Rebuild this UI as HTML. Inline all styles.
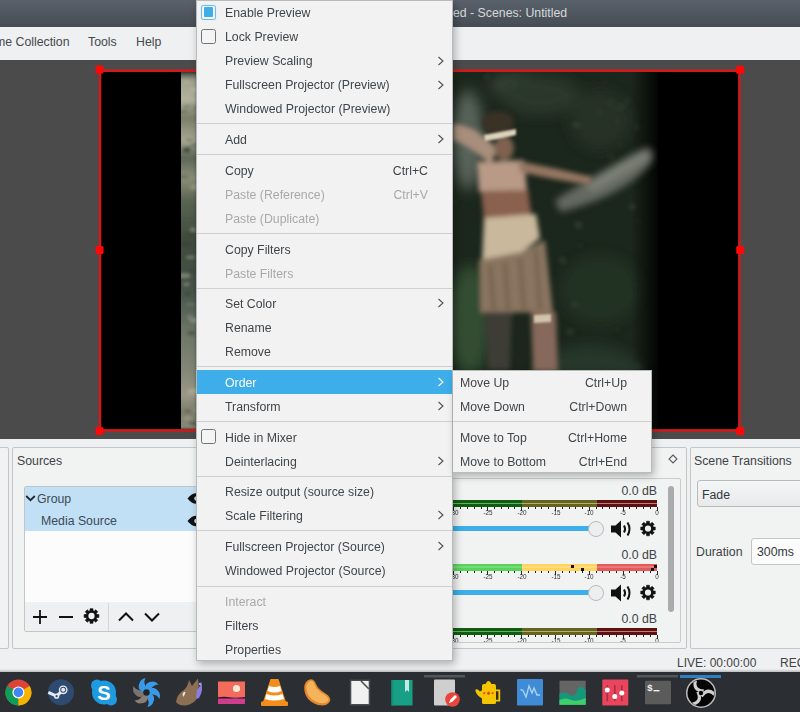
<!DOCTYPE html>
<html><head><meta charset="utf-8">
<style>
*{box-sizing:border-box}
html,body{margin:0;padding:0;width:800px;height:712px;overflow:hidden;background:#eff0f1;font-family:"Liberation Sans",sans-serif;position:relative}
.abs{position:absolute}
#title{position:absolute;left:0;top:0;width:800px;height:27px;background:linear-gradient(#59616a,#454c54)}
#title .t{position:absolute;left:453px;top:6px;font-size:12.3px;color:#d5d9dd;white-space:nowrap}
#menubar{position:absolute;left:0;top:27px;width:800px;height:33px;background:#eff0f1}
#menubar span{position:absolute;top:8px;font-size:12.3px;color:#45494e;white-space:nowrap}
#preview{position:absolute;left:0;top:60px;width:800px;height:379px;background:#4b4b4b;overflow:hidden}
#docks{position:absolute;left:0;top:439px;width:800px;height:233px;background:#eff0f1}
.panel{position:absolute;border:1px solid #c3c6c8;background:#f1f2f2;border-radius:2px}
.ptitle{position:absolute;font-size:12.3px;color:#3e4347;white-space:nowrap}
#menu{position:absolute;left:196px;top:0px;width:257px;height:661px;background:#f2f2f2;border:1px solid #b8babc;box-shadow:2px 3px 8px rgba(0,0,0,0.28)}
.mi{position:absolute;left:0;width:255px;height:24px;font-size:12.3px;color:#41464b}
.mi .lbl{position:absolute;left:28px;top:5.5px;white-space:nowrap}
.mi .sc{position:absolute;right:24px;top:5.5px;white-space:nowrap}
.mi.dis{color:#a7a9ab}
.mi.hl{background:#3daee9;color:#fcfcfc}
.mi .arr{position:absolute;left:240px;top:7px;color:#4d5257}
.mi.hl .arr{color:#fcfcfc}
.sep{position:absolute;left:0;width:255px;height:1px;background:#cfd0d1}
.cb{position:absolute;left:4.3px;top:4.3px;width:14.5px;height:14.8px;border:1px solid #707478;border-radius:2.5px;background:#f4f4f4}
.cb.on{border-color:#6cbbe9;box-shadow:0 0 1px #a8d8f5}
.cbin{position:absolute;left:1.6px;top:1.6px;width:9.3px;height:9.3px;background:#3daee9;border-radius:1px}
#sub{position:absolute;left:453px;top:370px;width:199px;height:103px;background:#f2f2f2;border:1px solid #b8babc;border-left:none;box-shadow:2px 3px 8px rgba(0,0,0,0.28)}
.smi{position:absolute;left:0;width:198px;height:24px;font-size:12.3px;color:#41464b}
.smi .lbl{position:absolute;left:7px;top:5px;white-space:nowrap}
.smi .sc{position:absolute;right:24px;top:5px;white-space:nowrap}
.db{position:absolute;right:24px;font-size:12.3px;color:#3e4347;white-space:nowrap}
.tnum{position:absolute;width:20px;text-align:center;font-size:7px;color:#333;transform:scaleX(0.9)}
.knob{position:absolute;width:16px;height:16px;border-radius:50%;background:#eceeef;border:1px solid #b7babc}
#status{position:absolute;left:0;top:655px;width:800px;height:17px;background:#eff0f1}
#status span{position:absolute;top:1px;font-size:12px;color:#3e4347;white-space:nowrap}
#taskbar{position:absolute;left:0;top:672px;width:800px;height:40px;background:#2b2f33}
</style></head><body>
<div id="title"><span class="t">ed - Scenes: Untitled</span></div>
<div id="menubar">
 <span style="left:-5px">me Collection</span>
 <span style="left:88px">Tools</span>
 <span style="left:136px">Help</span>
</div>
<div id="preview">
 <div class="abs" style="left:100px;top:11px;width:639px;height:360px;background:#000"></div>
 <svg class="abs" style="left:181px;top:12px" width="477" height="357" viewBox="181 72 477 357">
  <defs>
   <filter id="b6" x="-50%" y="-50%" width="200%" height="200%"><feGaussianBlur stdDeviation="7"/></filter>
   <filter id="b3" x="-50%" y="-50%" width="200%" height="200%"><feGaussianBlur stdDeviation="2.6"/></filter>
   <filter id="b1" x="-50%" y="-50%" width="200%" height="200%"><feGaussianBlur stdDeviation="1"/></filter>
   <linearGradient id="strip" x1="0" y1="72" x2="0" y2="429" gradientUnits="userSpaceOnUse"><stop offset="0.000" stop-color="#3a4038"/><stop offset="0.022" stop-color="#a0a28e"/><stop offset="0.078" stop-color="#b2b29c"/><stop offset="0.129" stop-color="#7a7e68"/><stop offset="0.185" stop-color="#a3a48c"/><stop offset="0.241" stop-color="#5e6658"/><stop offset="0.297" stop-color="#8c9079"/><stop offset="0.359" stop-color="#5a6452"/><stop offset="0.471" stop-color="#3f4b3d"/><stop offset="0.611" stop-color="#46534a"/><stop offset="0.723" stop-color="#6a7466"/><stop offset="0.835" stop-color="#838676"/><stop offset="0.905" stop-color="#9a9886"/><stop offset="0.952" stop-color="#7c7c6a"/><stop offset="1.000" stop-color="#8a8a78"/></linearGradient>
  </defs>
  <rect x="181" y="72" width="477" height="357" fill="#1b261c"/>
  <g filter="url(#b6)">
   <ellipse cx="468" cy="140" rx="16" ry="50" fill="#58645a"/>
   <ellipse cx="520" cy="85" rx="30" ry="12" fill="#3a463a"/>
   <ellipse cx="540" cy="95" rx="40" ry="20" fill="#2b382c"/>
   <ellipse cx="600" cy="120" rx="30" ry="30" fill="#253126"/>
   <ellipse cx="470" cy="320" rx="22" ry="55" fill="#334d33"/>
   <ellipse cx="600" cy="290" rx="40" ry="35" fill="#223024"/>
   <ellipse cx="590" cy="380" rx="55" ry="35" fill="#25382a"/>
   <ellipse cx="500" cy="410" rx="60" ry="25" fill="#2c3f2c"/>
   
  </g>
  <filter id="b15" x="-50%" y="-50%" width="200%" height="200%"><feGaussianBlur stdDeviation="1.6"/></filter>
  <g filter="url(#b15)">
   <rect x="176" y="72" width="21" height="357" fill="url(#strip)"/>
   <ellipse cx="189.7" cy="233.9" rx="4.5" ry="2.3" fill="#303a2e" opacity="0.32"/>
   <ellipse cx="189.1" cy="140.4" rx="3.3" ry="1.7" fill="#303a2e" opacity="0.40"/>
   <ellipse cx="192.7" cy="107.6" rx="5.9" ry="2.9" fill="#303a2e" opacity="0.21"/>
   <ellipse cx="190.4" cy="304.2" rx="4.6" ry="1.3" fill="#c4c4ac" opacity="0.20"/>
   <ellipse cx="185.9" cy="142.4" rx="4.3" ry="2.7" fill="#c4c4ac" opacity="0.32"/>
   <ellipse cx="190.7" cy="257.2" rx="4.4" ry="1.7" fill="#c4c4ac" opacity="0.37"/>
   <ellipse cx="194.9" cy="424.2" rx="3.9" ry="1.6" fill="#303a2e" opacity="0.38"/>
   <ellipse cx="183.8" cy="176.9" rx="5.5" ry="1.9" fill="#303a2e" opacity="0.30"/>
   <ellipse cx="193.2" cy="410.4" rx="5.7" ry="2.0" fill="#c4c4ac" opacity="0.25"/>
   <ellipse cx="187.8" cy="418.1" rx="5.3" ry="1.7" fill="#c4c4ac" opacity="0.36"/>
   <ellipse cx="187.0" cy="106.4" rx="3.4" ry="1.6" fill="#303a2e" opacity="0.39"/>
   <ellipse cx="183.7" cy="111.3" rx="4.7" ry="2.0" fill="#303a2e" opacity="0.24"/>
   <ellipse cx="191.8" cy="142.5" rx="3.3" ry="2.0" fill="#c4c4ac" opacity="0.36"/>
   <ellipse cx="186.2" cy="150.3" rx="3.9" ry="2.8" fill="#303a2e" opacity="0.40"/>
   <ellipse cx="187.7" cy="149.5" rx="3.3" ry="3.0" fill="#303a2e" opacity="0.36"/>
   <ellipse cx="186.1" cy="150.4" rx="3.9" ry="1.3" fill="#303a2e" opacity="0.28"/>
   <ellipse cx="190.0" cy="107.5" rx="4.1" ry="2.0" fill="#c4c4ac" opacity="0.35"/>
   <ellipse cx="188.8" cy="410.7" rx="3.5" ry="1.5" fill="#303a2e" opacity="0.42"/>
   <ellipse cx="192.8" cy="393.0" rx="5.2" ry="2.9" fill="#c4c4ac" opacity="0.25"/>
   <ellipse cx="194.4" cy="144.6" rx="4.3" ry="1.4" fill="#303a2e" opacity="0.35"/>
   <ellipse cx="194.6" cy="89.5" rx="3.8" ry="2.7" fill="#c4c4ac" opacity="0.38"/>
   <ellipse cx="186.5" cy="284.2" rx="3.2" ry="1.6" fill="#c4c4ac" opacity="0.38"/>
   <ellipse cx="193.2" cy="271.2" rx="5.8" ry="1.6" fill="#303a2e" opacity="0.27"/>
   <ellipse cx="186.2" cy="81.8" rx="3.5" ry="1.9" fill="#c4c4ac" opacity="0.22"/>
   <ellipse cx="184.6" cy="275.7" rx="5.9" ry="2.4" fill="#c4c4ac" opacity="0.42"/>
   <ellipse cx="190.0" cy="317.2" rx="3.1" ry="2.8" fill="#c4c4ac" opacity="0.21"/>
   <ellipse cx="194.6" cy="320.6" rx="4.4" ry="2.5" fill="#c4c4ac" opacity="0.36"/>
   <ellipse cx="195.0" cy="187.3" rx="5.2" ry="2.8" fill="#c4c4ac" opacity="0.34"/>
   <ellipse cx="191.4" cy="333.2" rx="4.1" ry="2.4" fill="#303a2e" opacity="0.43"/>
   <ellipse cx="193.5" cy="390.4" rx="5.6" ry="2.2" fill="#c4c4ac" opacity="0.40"/>
   <ellipse cx="187.6" cy="294.1" rx="3.2" ry="2.4" fill="#303a2e" opacity="0.35"/>
   <ellipse cx="193.6" cy="422.7" rx="5.2" ry="2.2" fill="#303a2e" opacity="0.30"/>
   <ellipse cx="193.1" cy="229.7" rx="3.1" ry="2.3" fill="#c4c4ac" opacity="0.39"/>
   <ellipse cx="185.8" cy="243.9" rx="4.8" ry="2.9" fill="#303a2e" opacity="0.32"/>
  </g>
  <rect x="171" y="72" width="10" height="357" fill="#000"/>
  <g filter="url(#b3)" opacity="0.8">
   <ellipse cx="477.5" cy="393.5" rx="3.7" ry="2.3" fill="#3a4a3a" opacity="0.63"/>
   <ellipse cx="617.2" cy="120.8" rx="2.8" ry="1.0" fill="#5a6a56" opacity="0.48"/>
   <ellipse cx="487.2" cy="76.4" rx="1.9" ry="1.9" fill="#5a6a56" opacity="0.59"/>
   <ellipse cx="599.7" cy="112.1" rx="2.1" ry="1.6" fill="#4a5a48" opacity="0.61"/>
   <ellipse cx="595.1" cy="394.4" rx="2.3" ry="2.9" fill="#6a7566" opacity="0.54"/>
   <ellipse cx="550.8" cy="381.6" rx="3.8" ry="2.8" fill="#3a4a3a" opacity="0.38"/>
   <ellipse cx="578.5" cy="224.9" rx="3.2" ry="2.6" fill="#5a6a56" opacity="0.66"/>
   <ellipse cx="576.5" cy="125.0" rx="3.9" ry="1.4" fill="#5a6a56" opacity="0.68"/>
   <ellipse cx="638.1" cy="366.4" rx="3.3" ry="3.0" fill="#5a6a56" opacity="0.46"/>
   <ellipse cx="584.5" cy="209.5" rx="2.8" ry="1.1" fill="#3a4a3a" opacity="0.69"/>
   <ellipse cx="600.4" cy="415.1" rx="1.7" ry="1.5" fill="#4a5a48" opacity="0.66"/>
   <ellipse cx="606.3" cy="372.4" rx="2.5" ry="2.1" fill="#3a4a3a" opacity="0.51"/>
   <ellipse cx="487.3" cy="388.3" rx="3.8" ry="2.3" fill="#3a4a3a" opacity="0.62"/>
   <ellipse cx="468.7" cy="374.7" rx="2.2" ry="1.2" fill="#4a5a48" opacity="0.30"/>
   <ellipse cx="638.9" cy="221.2" rx="3.1" ry="1.1" fill="#3a4a3a" opacity="0.58"/>
   <ellipse cx="628.4" cy="414.2" rx="1.6" ry="1.4" fill="#3a4a3a" opacity="0.42"/>
   <ellipse cx="456.4" cy="162.7" rx="1.5" ry="2.0" fill="#4a5a48" opacity="0.69"/>
   <ellipse cx="574.6" cy="304.8" rx="3.9" ry="1.6" fill="#6a7566" opacity="0.39"/>
   <ellipse cx="617.9" cy="330.1" rx="2.5" ry="1.7" fill="#5a6a56" opacity="0.32"/>
   <ellipse cx="477.3" cy="99.8" rx="2.6" ry="1.1" fill="#3a4a3a" opacity="0.57"/>
   <ellipse cx="634.6" cy="284.6" rx="1.6" ry="1.4" fill="#3a4a3a" opacity="0.41"/>
   <ellipse cx="453.7" cy="202.4" rx="3.9" ry="2.1" fill="#3a4a3a" opacity="0.40"/>
   <ellipse cx="633.6" cy="183.3" rx="2.0" ry="1.7" fill="#3a4a3a" opacity="0.33"/>
   <ellipse cx="470.0" cy="361.0" rx="2.5" ry="1.1" fill="#5a6a56" opacity="0.31"/>
   <ellipse cx="562.5" cy="260.2" rx="3.1" ry="2.4" fill="#5a6a56" opacity="0.65"/>
   <ellipse cx="637.1" cy="127.3" rx="1.6" ry="2.7" fill="#5a6a56" opacity="0.66"/>
   <ellipse cx="570.3" cy="331.8" rx="3.8" ry="2.5" fill="#5a6a56" opacity="0.53"/>
   <ellipse cx="605.0" cy="80.6" rx="1.7" ry="1.1" fill="#5a6a56" opacity="0.55"/>
   <ellipse cx="632.4" cy="206.8" rx="2.9" ry="2.3" fill="#6a7566" opacity="0.55"/>
   <ellipse cx="580.3" cy="246.3" rx="2.6" ry="1.1" fill="#4a5a48" opacity="0.67"/>
   <ellipse cx="620.9" cy="107.2" rx="3.4" ry="1.9" fill="#4a5a48" opacity="0.62"/>
   <ellipse cx="611.2" cy="157.2" rx="2.1" ry="2.3" fill="#5a6a56" opacity="0.48"/>
   <ellipse cx="611.1" cy="101.9" rx="3.4" ry="2.2" fill="#3a4a3a" opacity="0.56"/>
   <ellipse cx="467.5" cy="126.6" rx="3.1" ry="2.4" fill="#3a4a3a" opacity="0.55"/>
   <ellipse cx="543.8" cy="415.4" rx="3.2" ry="2.4" fill="#4a5a48" opacity="0.42"/>
   <ellipse cx="620.1" cy="144.7" rx="3.8" ry="1.0" fill="#4a5a48" opacity="0.48"/>
   <ellipse cx="606.3" cy="413.8" rx="4.0" ry="1.8" fill="#6a7566" opacity="0.67"/>
   <ellipse cx="627.0" cy="101.1" rx="1.9" ry="2.0" fill="#4a5a48" opacity="0.68"/>
  </g>
  <linearGradient id="edge" x1="0" x2="1"><stop offset="0" stop-color="#000" stop-opacity="0"/><stop offset="1" stop-color="#000" stop-opacity="0.85"/></linearGradient>
  <rect x="632" y="72" width="26" height="357" fill="url(#edge)"/>
  <filter id="b4" x="-50%" y="-50%" width="200%" height="200%"><feGaussianBlur stdDeviation="3.5"/></filter>
  <g filter="url(#b4)">
   <path d="M555 200 Q600 172 640 150 Q656 142 652 162 Q625 196 560 212Z" fill="#6c7068" opacity="0.9"/>
   <path d="M585 185 Q615 165 643 152 Q650 152 648 160 Q625 175 592 192Z" fill="#8a8d84" opacity="0.6"/>
  </g>
  <g filter="url(#b3)">
   <!-- fan -->

   <!-- left raised arm -->
   <path d="M453 124 Q475 124 498 150 L490 164 Q470 146 453 140Z" fill="#a88e7c"/>
   <!-- hair -->
   <ellipse cx="498" cy="123" rx="16" ry="12" fill="#3b3026"/>
   <!-- face -->
   <ellipse cx="504" cy="148" rx="10" ry="12" fill="#7e6250"/>
   <!-- torso / bikini top -->
   <path d="M477 162 L524 160 L527 191 L479 192Z" fill="#b89a86"/>
   <!-- right arm -->
   <path d="M518 161 Q555 168 592 177 L590 185 Q555 180 520 172Z" fill="#957762"/>
   <!-- belly -->
   <path d="M481 191 L528 190 L532 220 L484 220Z" fill="#8a6050"/>
   <!-- skirt top -->
   <path d="M484 218 L536 214 L540 238 L520 254 L482 262Z" fill="#c9b89c"/>
   <!-- skirt -->
   <path d="M479 260 L522 252 L545 240 L553 312 L480 313Z" fill="#8a7560"/>
   <path d="M490 265 L494 310 M505 262 L508 310 M520 258 L524 310 M536 250 L540 310" stroke="#6e5a48" stroke-width="3"/>
   <!-- left leg -->
   <path d="M484 312 L512 312 L510 370 L488 370Z" fill="#3d3e34"/>
   <!-- right leg -->
   <path d="M531 312 L556 312 L558 372 L533 372Z" fill="#86695a"/>
  </g>
  <g filter="url(#b1)">
   <path d="M484 135 Q500 132 516 129 L516 135 Q500 139 485 141Z" fill="#ddd2bc"/>
   <path d="M534 315 L551 314 L551 322 L534 323Z" fill="#d0c4aa"/>
  </g>
 </svg>
 <svg class="abs" style="left:0;top:0" width="800" height="379" viewBox="0 60 800 379">
  <rect x="100" y="70.7" width="639.4" height="359.7" fill="none" stroke="#cf1b1b" stroke-width="2.6"/>
  <g fill="#ff0707">
   <rect x="95.5" y="65.5" width="8" height="8" rx="1.5"/>
   <rect x="95.5" y="246" width="8" height="8" rx="1.5"/>
   <rect x="95.5" y="427" width="8" height="8" rx="1.5"/>
   <rect x="736.2" y="65.7" width="8" height="8" rx="1.5"/>
   <rect x="736.2" y="246" width="8" height="8" rx="1.5"/>
   <rect x="736.2" y="427" width="8" height="8" rx="1.5"/>
  </g>
 </svg>
</div>
<div id="docks">
 <div class="panel" style="left:-10px;top:8px;width:19px;height:202px"></div>
 <div class="panel" style="left:12px;top:8px;width:340px;height:202px">
  <span class="ptitle" style="left:4px;top:6px">Sources</span>
  <div class="abs" style="left:11px;top:38px;width:330px;height:146px;border:1px solid #c3c6c8;background:#fcfcfc;border-radius:2px;overflow:hidden">
   <div class="abs" style="left:0;top:0;width:330px;height:44px;background:#c2e0f5"></div>
   <svg class="abs" style="left:0px;top:6px" width="12" height="10" viewBox="0 0 12 10"><path d="M1.2 3 L5.5 7.2 L9.8 3" fill="none" stroke="#1d2a33" stroke-width="1.8"/></svg>
   <span class="abs" style="left:12px;top:5px;font-size:12.3px;color:#3b4a55">Group</span>
   <span class="abs" style="left:16px;top:27px;font-size:12.3px;color:#3b4a55">Media Source</span>
   <svg class="abs" style="left:162px;top:6px" width="18" height="36" viewBox="0 0 18 36"><path d="M0.5 5.5 Q9 -5 17.5 5.5 Q9 16 0.5 5.5Z" fill="#111"/><circle cx="9.5" cy="5.5" r="2.3" fill="#c2e0f5"/><path d="M0.5 28 Q9 17.5 17.5 28 Q9 38.5 0.5 28Z" fill="#111"/><circle cx="9.5" cy="28" r="2.3" fill="#c2e0f5"/></svg>
   <div class="abs" style="left:0;top:115px;width:330px;height:31px;background:#eff0f1"></div>
   <div class="abs" style="left:83px;top:116px;width:1px;height:28px;background:#d5d6d7"></div>
   <svg class="abs" style="left:6.5px;top:122px" width="16" height="16" viewBox="0 0 16 16"><path d="M8 1v14M1 8h14" stroke="#111" stroke-width="1.8"/></svg>
   <svg class="abs" style="left:32.8px;top:122px" width="16" height="16" viewBox="0 0 16 16"><path d="M1 8h14" stroke="#111" stroke-width="1.8"/></svg>
   <svg class="abs" style="left:93px;top:125px" width="16" height="10" viewBox="0 0 16 10"><path d="M1 8.5 L8 1.5 L15 8.5" fill="none" stroke="#111" stroke-width="2"/></svg>
   <svg class="abs" style="left:118.5px;top:124.5px" width="16" height="10" viewBox="0 0 16 10"><path d="M1 1.5 L8 8.5 L15 1.5" fill="none" stroke="#111" stroke-width="2"/></svg>
  </div>
 </div>
 <div class="panel" style="left:352px;top:8px;width:335px;height:202px">
  <div class="abs" style="left:300px;top:-2px"></div>
 </div>
 <svg class="abs" style="left:668px;top:15px" width="10" height="10" viewBox="0 0 10 10"><path d="M5 1 L9 5 L5 9 L1 5Z" fill="none" stroke="#5a5e62" stroke-width="1.1"/></svg>
 <div class="abs" style="left:360px;top:39px;width:321px;height:165px;border:1px solid #c9cbcd;border-radius:2px"></div>
 <div class="abs" style="left:668px;top:47px;width:6px;height:126px;background:#a9abad;border-radius:3px"></div>
 <div class="panel" style="left:690px;top:8px;width:120px;height:202px">
  <span class="ptitle" style="left:3px;top:6px">Scene Transitions</span>
  <div class="abs" style="left:6px;top:32px;width:120px;height:27px;border:1px solid #b9bcbe;border-radius:3px;background:linear-gradient(#f4f5f5,#e9eaeb)"></div>
  <span class="abs" style="left:11px;top:39.5px;font-size:12.3px;color:#33383d">Fade</span>
  <span class="abs" style="left:5px;top:97px;font-size:12.3px;color:#3e4347">Duration</span>
  <div class="abs" style="left:60px;top:90px;width:80px;height:27px;border:1px solid #c3c6c8;border-radius:3px;background:#fcfcfc"></div>
  <span class="abs" style="left:66px;top:97px;font-size:12.3px;color:#33383d">300ms</span>
 </div>
</div>
<div style="position:absolute;left:0;top:0;width:681px;height:642px;overflow:hidden"><div class="db" style="top:484px">0.0 dB</div><div style="position:absolute;left:250.8px;top:500px;width:270.8px;height:6.6px;background:linear-gradient(#135a13 0 2.5px,#5cb55c 2.5px 4.4px,#135a13 4.4px 6.6px)"></div><div style="position:absolute;left:521.6px;top:500px;width:75.0px;height:6.6px;background:linear-gradient(#646420 0 2.5px,#b0b068 2.5px 4.4px,#646420 4.4px 6.6px)"></div><div style="position:absolute;left:596.6px;top:500px;width:60.4px;height:6.6px;background:linear-gradient(#5c1010 0 2.5px,#c07a7a 2.5px 4.4px,#5c1010 4.4px 6.6px)"></div><div style="position:absolute;left:656.5px;top:506.6px;width:1px;height:4px;background:#222"></div><div class="tnum" style="left:647.0px;top:509px">0</div><div style="position:absolute;left:649.7px;top:506.6px;width:1px;height:2px;background:#222"></div><div style="position:absolute;left:643.0px;top:506.6px;width:1px;height:2px;background:#222"></div><div style="position:absolute;left:636.2px;top:506.6px;width:1px;height:2px;background:#222"></div><div style="position:absolute;left:629.4px;top:506.6px;width:1px;height:2px;background:#222"></div><div style="position:absolute;left:622.6px;top:506.6px;width:1px;height:4px;background:#222"></div><div class="tnum" style="left:613.1px;top:509px">-5</div><div style="position:absolute;left:615.9px;top:506.6px;width:1px;height:2px;background:#222"></div><div style="position:absolute;left:609.1px;top:506.6px;width:1px;height:2px;background:#222"></div><div style="position:absolute;left:602.3px;top:506.6px;width:1px;height:2px;background:#222"></div><div style="position:absolute;left:595.6px;top:506.6px;width:1px;height:2px;background:#222"></div><div style="position:absolute;left:588.8px;top:506.6px;width:1px;height:4px;background:#222"></div><div class="tnum" style="left:579.3px;top:509px">-10</div><div style="position:absolute;left:582.0px;top:506.6px;width:1px;height:2px;background:#222"></div><div style="position:absolute;left:575.3px;top:506.6px;width:1px;height:2px;background:#222"></div><div style="position:absolute;left:568.5px;top:506.6px;width:1px;height:2px;background:#222"></div><div style="position:absolute;left:561.7px;top:506.6px;width:1px;height:2px;background:#222"></div><div style="position:absolute;left:555.0px;top:506.6px;width:1px;height:4px;background:#222"></div><div class="tnum" style="left:545.5px;top:509px">-15</div><div style="position:absolute;left:548.2px;top:506.6px;width:1px;height:2px;background:#222"></div><div style="position:absolute;left:541.4px;top:506.6px;width:1px;height:2px;background:#222"></div><div style="position:absolute;left:534.6px;top:506.6px;width:1px;height:2px;background:#222"></div><div style="position:absolute;left:527.9px;top:506.6px;width:1px;height:2px;background:#222"></div><div style="position:absolute;left:521.1px;top:506.6px;width:1px;height:4px;background:#222"></div><div class="tnum" style="left:511.6px;top:509px">-20</div><div style="position:absolute;left:514.3px;top:506.6px;width:1px;height:2px;background:#222"></div><div style="position:absolute;left:507.6px;top:506.6px;width:1px;height:2px;background:#222"></div><div style="position:absolute;left:500.8px;top:506.6px;width:1px;height:2px;background:#222"></div><div style="position:absolute;left:494.0px;top:506.6px;width:1px;height:2px;background:#222"></div><div style="position:absolute;left:487.2px;top:506.6px;width:1px;height:4px;background:#222"></div><div class="tnum" style="left:477.8px;top:509px">-25</div><div style="position:absolute;left:480.5px;top:506.6px;width:1px;height:2px;background:#222"></div><div style="position:absolute;left:473.7px;top:506.6px;width:1px;height:2px;background:#222"></div><div style="position:absolute;left:466.9px;top:506.6px;width:1px;height:2px;background:#222"></div><div style="position:absolute;left:460.2px;top:506.6px;width:1px;height:2px;background:#222"></div><div style="position:absolute;left:453.4px;top:506.6px;width:1px;height:4px;background:#222"></div><div class="tnum" style="left:443.9px;top:509px">-30</div><div style="position:absolute;left:446.6px;top:506.6px;width:1px;height:2px;background:#222"></div><div style="position:absolute;left:439.9px;top:506.6px;width:1px;height:2px;background:#222"></div><div style="position:absolute;left:440px;top:526.0px;width:156px;height:5px;background:#3daee9;border-radius:2px"></div><div class="knob" style="left:588px;top:520.5px"></div><svg style="position:absolute;left:610px;top:518.5px" width="24" height="20" viewBox="0 0 24 20"><path d="M1 6.5h4.5L11 1.5v17L5.5 13.5H1z" fill="#111"/><path d="M14 6.5q2.2 3.5 0 7" fill="none" stroke="#111" stroke-width="2"/><path d="M17.5 3.5q4 6.5 0 13" fill="none" stroke="#111" stroke-width="2"/></svg><svg style="position:absolute;left:0;top:0;overflow:visible" width="1" height="1"><path d="M653.26 526.99 L655.26 527.09 L655.26 529.91 L653.26 530.01 L652.79 531.15 L654.13 532.64 L652.14 534.63 L650.65 533.29 L649.51 533.76 L649.41 535.76 L646.59 535.76 L646.49 533.76 L645.35 533.29 L643.86 534.63 L641.87 532.64 L643.21 531.15 L642.74 530.01 L640.74 529.91 L640.74 527.09 L642.74 526.99 L643.21 525.85 L641.87 524.36 L643.86 522.37 L645.35 523.71 L646.49 523.24 L646.59 521.24 L649.41 521.24 L649.51 523.24 L650.65 523.71 L652.14 522.37 L654.13 524.36 L652.79 525.85Z" fill="#111" stroke="#111" stroke-width="0.6" stroke-linejoin="round"/><circle cx="648" cy="528.5" r="3.11" fill="#eff0f1"/></svg><div class="db" style="top:548px">0.0 dB</div><div style="position:absolute;left:250.8px;top:564px;width:270.8px;height:6.6px;background:linear-gradient(#5bd35b 0 2.5px,#74dc74 2.5px 4.4px,#5bd35b 4.4px 6.6px)"></div><div style="position:absolute;left:521.6px;top:564px;width:75.0px;height:6.6px;background:linear-gradient(#ffd35c 0 2.5px,#ffdc7a 2.5px 4.4px,#ffd35c 4.4px 6.6px)"></div><div style="position:absolute;left:596.6px;top:564px;width:60.4px;height:6.6px;background:linear-gradient(#e35a5a 0 2.5px,#ea7878 2.5px 4.4px,#e35a5a 4.4px 6.6px)"></div><div style="position:absolute;left:656.5px;top:570.6px;width:1px;height:4px;background:#222"></div><div class="tnum" style="left:647.0px;top:573px">0</div><div style="position:absolute;left:649.7px;top:570.6px;width:1px;height:2px;background:#222"></div><div style="position:absolute;left:643.0px;top:570.6px;width:1px;height:2px;background:#222"></div><div style="position:absolute;left:636.2px;top:570.6px;width:1px;height:2px;background:#222"></div><div style="position:absolute;left:629.4px;top:570.6px;width:1px;height:2px;background:#222"></div><div style="position:absolute;left:622.6px;top:570.6px;width:1px;height:4px;background:#222"></div><div class="tnum" style="left:613.1px;top:573px">-5</div><div style="position:absolute;left:615.9px;top:570.6px;width:1px;height:2px;background:#222"></div><div style="position:absolute;left:609.1px;top:570.6px;width:1px;height:2px;background:#222"></div><div style="position:absolute;left:602.3px;top:570.6px;width:1px;height:2px;background:#222"></div><div style="position:absolute;left:595.6px;top:570.6px;width:1px;height:2px;background:#222"></div><div style="position:absolute;left:588.8px;top:570.6px;width:1px;height:4px;background:#222"></div><div class="tnum" style="left:579.3px;top:573px">-10</div><div style="position:absolute;left:582.0px;top:570.6px;width:1px;height:2px;background:#222"></div><div style="position:absolute;left:575.3px;top:570.6px;width:1px;height:2px;background:#222"></div><div style="position:absolute;left:568.5px;top:570.6px;width:1px;height:2px;background:#222"></div><div style="position:absolute;left:561.7px;top:570.6px;width:1px;height:2px;background:#222"></div><div style="position:absolute;left:555.0px;top:570.6px;width:1px;height:4px;background:#222"></div><div class="tnum" style="left:545.5px;top:573px">-15</div><div style="position:absolute;left:548.2px;top:570.6px;width:1px;height:2px;background:#222"></div><div style="position:absolute;left:541.4px;top:570.6px;width:1px;height:2px;background:#222"></div><div style="position:absolute;left:534.6px;top:570.6px;width:1px;height:2px;background:#222"></div><div style="position:absolute;left:527.9px;top:570.6px;width:1px;height:2px;background:#222"></div><div style="position:absolute;left:521.1px;top:570.6px;width:1px;height:4px;background:#222"></div><div class="tnum" style="left:511.6px;top:573px">-20</div><div style="position:absolute;left:514.3px;top:570.6px;width:1px;height:2px;background:#222"></div><div style="position:absolute;left:507.6px;top:570.6px;width:1px;height:2px;background:#222"></div><div style="position:absolute;left:500.8px;top:570.6px;width:1px;height:2px;background:#222"></div><div style="position:absolute;left:494.0px;top:570.6px;width:1px;height:2px;background:#222"></div><div style="position:absolute;left:487.2px;top:570.6px;width:1px;height:4px;background:#222"></div><div class="tnum" style="left:477.8px;top:573px">-25</div><div style="position:absolute;left:480.5px;top:570.6px;width:1px;height:2px;background:#222"></div><div style="position:absolute;left:473.7px;top:570.6px;width:1px;height:2px;background:#222"></div><div style="position:absolute;left:466.9px;top:570.6px;width:1px;height:2px;background:#222"></div><div style="position:absolute;left:460.2px;top:570.6px;width:1px;height:2px;background:#222"></div><div style="position:absolute;left:453.4px;top:570.6px;width:1px;height:4px;background:#222"></div><div class="tnum" style="left:443.9px;top:573px">-30</div><div style="position:absolute;left:446.6px;top:570.6px;width:1px;height:2px;background:#222"></div><div style="position:absolute;left:439.9px;top:570.6px;width:1px;height:2px;background:#222"></div><div style="position:absolute;left:571px;top:565px;width:2.5px;height:2.5px;background:#111"></div><div style="position:absolute;left:581px;top:568px;width:2.5px;height:2.5px;background:#111"></div><div style="position:absolute;left:654px;top:565px;width:2.5px;height:2.5px;background:#111"></div><div style="position:absolute;left:651px;top:568px;width:2.5px;height:2.5px;background:#111"></div><div style="position:absolute;left:440px;top:590.0px;width:156px;height:5px;background:#3daee9;border-radius:2px"></div><div class="knob" style="left:588px;top:584.5px"></div><svg style="position:absolute;left:610px;top:582.5px" width="24" height="20" viewBox="0 0 24 20"><path d="M1 6.5h4.5L11 1.5v17L5.5 13.5H1z" fill="#111"/><path d="M14 6.5q2.2 3.5 0 7" fill="none" stroke="#111" stroke-width="2"/><path d="M17.5 3.5q4 6.5 0 13" fill="none" stroke="#111" stroke-width="2"/></svg><svg style="position:absolute;left:0;top:0;overflow:visible" width="1" height="1"><path d="M653.26 590.99 L655.26 591.09 L655.26 593.91 L653.26 594.01 L652.79 595.15 L654.13 596.64 L652.14 598.63 L650.65 597.29 L649.51 597.76 L649.41 599.76 L646.59 599.76 L646.49 597.76 L645.35 597.29 L643.86 598.63 L641.87 596.64 L643.21 595.15 L642.74 594.01 L640.74 593.91 L640.74 591.09 L642.74 590.99 L643.21 589.85 L641.87 588.36 L643.86 586.37 L645.35 587.71 L646.49 587.24 L646.59 585.24 L649.41 585.24 L649.51 587.24 L650.65 587.71 L652.14 586.37 L654.13 588.36 L652.79 589.85Z" fill="#111" stroke="#111" stroke-width="0.6" stroke-linejoin="round"/><circle cx="648" cy="592.5" r="3.11" fill="#eff0f1"/></svg><div class="db" style="top:612px">0.0 dB</div><div style="position:absolute;left:250.8px;top:628px;width:270.8px;height:6.6px;background:linear-gradient(#135a13 0 2.5px,#5cb55c 2.5px 4.4px,#135a13 4.4px 6.6px)"></div><div style="position:absolute;left:521.6px;top:628px;width:75.0px;height:6.6px;background:linear-gradient(#646420 0 2.5px,#b0b068 2.5px 4.4px,#646420 4.4px 6.6px)"></div><div style="position:absolute;left:596.6px;top:628px;width:60.4px;height:6.6px;background:linear-gradient(#5c1010 0 2.5px,#c07a7a 2.5px 4.4px,#5c1010 4.4px 6.6px)"></div><div style="position:absolute;left:656.5px;top:634.6px;width:1px;height:4px;background:#222"></div><div class="tnum" style="left:647.0px;top:637px">0</div><div style="position:absolute;left:649.7px;top:634.6px;width:1px;height:2px;background:#222"></div><div style="position:absolute;left:643.0px;top:634.6px;width:1px;height:2px;background:#222"></div><div style="position:absolute;left:636.2px;top:634.6px;width:1px;height:2px;background:#222"></div><div style="position:absolute;left:629.4px;top:634.6px;width:1px;height:2px;background:#222"></div><div style="position:absolute;left:622.6px;top:634.6px;width:1px;height:4px;background:#222"></div><div class="tnum" style="left:613.1px;top:637px">-5</div><div style="position:absolute;left:615.9px;top:634.6px;width:1px;height:2px;background:#222"></div><div style="position:absolute;left:609.1px;top:634.6px;width:1px;height:2px;background:#222"></div><div style="position:absolute;left:602.3px;top:634.6px;width:1px;height:2px;background:#222"></div><div style="position:absolute;left:595.6px;top:634.6px;width:1px;height:2px;background:#222"></div><div style="position:absolute;left:588.8px;top:634.6px;width:1px;height:4px;background:#222"></div><div class="tnum" style="left:579.3px;top:637px">-10</div><div style="position:absolute;left:582.0px;top:634.6px;width:1px;height:2px;background:#222"></div><div style="position:absolute;left:575.3px;top:634.6px;width:1px;height:2px;background:#222"></div><div style="position:absolute;left:568.5px;top:634.6px;width:1px;height:2px;background:#222"></div><div style="position:absolute;left:561.7px;top:634.6px;width:1px;height:2px;background:#222"></div><div style="position:absolute;left:555.0px;top:634.6px;width:1px;height:4px;background:#222"></div><div class="tnum" style="left:545.5px;top:637px">-15</div><div style="position:absolute;left:548.2px;top:634.6px;width:1px;height:2px;background:#222"></div><div style="position:absolute;left:541.4px;top:634.6px;width:1px;height:2px;background:#222"></div><div style="position:absolute;left:534.6px;top:634.6px;width:1px;height:2px;background:#222"></div><div style="position:absolute;left:527.9px;top:634.6px;width:1px;height:2px;background:#222"></div><div style="position:absolute;left:521.1px;top:634.6px;width:1px;height:4px;background:#222"></div><div class="tnum" style="left:511.6px;top:637px">-20</div><div style="position:absolute;left:514.3px;top:634.6px;width:1px;height:2px;background:#222"></div><div style="position:absolute;left:507.6px;top:634.6px;width:1px;height:2px;background:#222"></div><div style="position:absolute;left:500.8px;top:634.6px;width:1px;height:2px;background:#222"></div><div style="position:absolute;left:494.0px;top:634.6px;width:1px;height:2px;background:#222"></div><div style="position:absolute;left:487.2px;top:634.6px;width:1px;height:4px;background:#222"></div><div class="tnum" style="left:477.8px;top:637px">-25</div><div style="position:absolute;left:480.5px;top:634.6px;width:1px;height:2px;background:#222"></div><div style="position:absolute;left:473.7px;top:634.6px;width:1px;height:2px;background:#222"></div><div style="position:absolute;left:466.9px;top:634.6px;width:1px;height:2px;background:#222"></div><div style="position:absolute;left:460.2px;top:634.6px;width:1px;height:2px;background:#222"></div><div style="position:absolute;left:453.4px;top:634.6px;width:1px;height:4px;background:#222"></div><div class="tnum" style="left:443.9px;top:637px">-30</div><div style="position:absolute;left:446.6px;top:634.6px;width:1px;height:2px;background:#222"></div><div style="position:absolute;left:439.9px;top:634.6px;width:1px;height:2px;background:#222"></div><div style="position:absolute;left:440px;top:654.0px;width:156px;height:5px;background:#3daee9;border-radius:2px"></div><div class="knob" style="left:588px;top:648.5px"></div><svg style="position:absolute;left:610px;top:646.5px" width="24" height="20" viewBox="0 0 24 20"><path d="M1 6.5h4.5L11 1.5v17L5.5 13.5H1z" fill="#111"/><path d="M14 6.5q2.2 3.5 0 7" fill="none" stroke="#111" stroke-width="2"/><path d="M17.5 3.5q4 6.5 0 13" fill="none" stroke="#111" stroke-width="2"/></svg><svg style="position:absolute;left:0;top:0;overflow:visible" width="1" height="1"><path d="M653.26 654.99 L655.26 655.09 L655.26 657.91 L653.26 658.01 L652.79 659.15 L654.13 660.64 L652.14 662.63 L650.65 661.29 L649.51 661.76 L649.41 663.76 L646.59 663.76 L646.49 661.76 L645.35 661.29 L643.86 662.63 L641.87 660.64 L643.21 659.15 L642.74 658.01 L640.74 657.91 L640.74 655.09 L642.74 654.99 L643.21 653.85 L641.87 652.36 L643.86 650.37 L645.35 651.71 L646.49 651.24 L646.59 649.24 L649.41 649.24 L649.51 651.24 L650.65 651.71 L652.14 650.37 L654.13 652.36 L652.79 653.85Z" fill="#111" stroke="#111" stroke-width="0.6" stroke-linejoin="round"/><circle cx="648" cy="656.5" r="3.11" fill="#eff0f1"/></svg></div>
<div id="status">
 <span style="left:677px">LIVE: 00:00:00</span>
 <span style="left:780px">REC</span>
</div>
<div class="abs" style="left:0;top:669px;width:800px;height:3px;background:linear-gradient(rgba(0,0,0,0),rgba(0,0,0,0.22))"></div>
<svg class="abs" style="left:0;top:672px" width="800" height="40" viewBox="0 672 800 40">
 <rect x="0" y="672" width="800" height="40" fill="#2b2f33"/>
 <rect x="424" y="675" width="41" height="2.5" fill="#53575b"/>
 <rect x="637" y="675" width="41" height="2.5" fill="#53575b"/>
 <rect x="680" y="675" width="41" height="3" fill="#2e7ec4"/>
 <!-- chrome -->
 <g transform="translate(18.4 692.4)">
  <circle r="13" fill="#db4437"/>
  <path d="M0 0 L-11.26 -6.5 A13 13 0 0 0 0 13 Z" fill="#0f9d58"/>
  <path d="M0 0 L0 13 A13 13 0 0 0 11.26 -6.5 Z" fill="#f4b400"/>
  <circle r="6" fill="#fff"/>
  <circle r="4.8" fill="#4285f4"/>
 </g>
 <!-- steam -->
 <g>
  <circle cx="61" cy="692.3" r="13" fill="#2f4a70"/>
  <path d="M48.3 692.3 L56.6 696.2 L63.2 689.8" fill="none" stroke="#e6ebef" stroke-width="3" stroke-linejoin="round"/>
  <circle cx="63.2" cy="689.8" r="4.4" fill="#e6ebef"/>
  <circle cx="63.2" cy="689.8" r="3" fill="#2f4a70"/>
  <circle cx="63.2" cy="689.8" r="2" fill="#e6ebef"/>
  <circle cx="56.6" cy="696.2" r="2.6" fill="#e6ebef"/>
  <circle cx="56.6" cy="696.2" r="1.1" fill="#2f4a70"/>
 </g>
 <!-- skype -->
 <g transform="translate(104 692.5)">
  <circle r="12" fill="#1e9ae0"/>
  <circle cx="-7" cy="-7" r="6" fill="#1e9ae0"/>
  <circle cx="7" cy="7" r="6" fill="#1e9ae0"/>
  <text x="0" y="7" text-anchor="middle" font-family="Liberation Sans" font-weight="bold" font-size="20" fill="#fff">S</text>
 </g>
 <!-- swirl -->
 <g transform="translate(146.5 692.5)">
  <path d="M-1.5 -3.5 Q-2 -11 7 -11 Q10 -10.5 12 -8 Q6 -8 3.5 -1.5 Z" fill="#3a9ae8" transform="rotate(0)"/>
  <path d="M-1.5 -3.5 Q-2 -11 7 -11 Q10 -10.5 12 -8 Q6 -8 3.5 -1.5 Z" fill="#3a9ae8" transform="rotate(60)"/>
  <path d="M-1.5 -3.5 Q-2 -11 7 -11 Q10 -10.5 12 -8 Q6 -8 3.5 -1.5 Z" fill="#3a9ae8" transform="rotate(120)"/>
  <path d="M-1.5 -3.5 Q-2 -11 7 -11 Q10 -10.5 12 -8 Q6 -8 3.5 -1.5 Z" fill="#8a7d74" transform="rotate(180)"/>
  <path d="M-1.5 -3.5 Q-2 -11 7 -11 Q10 -10.5 12 -8 Q6 -8 3.5 -1.5 Z" fill="#7a7470" transform="rotate(240)"/>
  <path d="M-1.5 -3.5 Q-2 -11 7 -11 Q10 -10.5 12 -8 Q6 -8 3.5 -1.5 Z" fill="#3a9ae8" transform="rotate(300)"/>
  <circle r="3.2" fill="#22262a"/>
 </g>
 <!-- creature -->
 <g>
  <path d="M176 702 Q177 694 184 690 Q188 686 189 680 L192 686 L198 678.5 Q199.5 688 198 696 Q195 704 186 705.5 Q179 706 176 702Z" fill="#8d7053"/>
  <path d="M197 690 Q201 686 201 681 Q204 690 199 698 L196 699Z" fill="#8a7fe0"/>
  <circle cx="200" cy="684" r="1.2" fill="#a89ff0"/>
  <path d="M182.5 694 Q184 691 185.5 692 Q185 695 183 697Z" fill="#eee6d8"/>
 </g>
 <!-- screenshot -->
 <rect x="218" y="681.5" width="27" height="16" fill="#f26b5b"/>
 <rect x="218" y="697.5" width="27" height="6.5" fill="#cf3d8c"/>
 <path d="M218 697.5 Q224 696 230 697.5 T245 697 V698.5 H218Z" fill="#2a1a22"/>
 <circle cx="236.5" cy="688.5" r="3.6" fill="#fbe9d8"/>
 <!-- vlc -->
 <g>
  <path d="M274.5 679 L270.5 679 L263 702 L286 702 L278.5 679Z" fill="#f28e1c"/>
  <rect x="261" y="701.5" width="27" height="4.5" rx="1" fill="#f28e1c"/>
  <path d="M269 686 Q274.5 688 280 686 L281.5 691 Q274.5 694 267.5 691Z" fill="#fff"/>
  <path d="M266.5 694 Q274.5 697 282.5 694 L284 699 Q274.5 702 265 699Z" fill="#fff"/>
 </g>
 <!-- orange -->
 <path d="M310.5 679.3 Q304.5 680.5 304.2 688 Q304.5 700.5 318 705 Q327.5 707 330.3 700.5 Q330.5 696.5 325.5 693.5 Q318.5 689.5 316 684 Q314.5 679.5 310.5 679.3 Z" fill="#e5852a"/>
 <path d="M311 680.8 Q306.5 682 306.3 688.5 Q307 699 318.5 702.8 Q326.5 704.3 328.6 700 Q328.5 697 324 694.5 Q317 690.5 314.8 685 Q313.8 681 311 680.8 Z" fill="#f4b45c"/>
 <!-- doc -->
 <rect x="349.8" y="679.5" width="20.4" height="26" fill="#484c50"/>
 <rect x="351.3" y="681" width="17.4" height="23" fill="#f1f1f1"/>
 <path d="M361 681 L368.7 688.7" stroke="#484c50" stroke-width="1.6"/>
 <!-- teal book -->
 <rect x="391.5" y="680" width="21" height="25.5" fill="#17a086"/>
 <rect x="391.5" y="680" width="2" height="25.5" fill="#14937b"/>
 <path d="M405 680 H409 V692 L407 690 L405 692Z" fill="#c9e8e2"/>
 <!-- gray doc pencil -->
 <rect x="434" y="679.5" width="21" height="26" rx="1" fill="#cfcfcf"/>
 <circle cx="452.5" cy="699.5" r="7.3" fill="#e8453c"/>
 <path d="M449 703 L450 700 L455 695 L457 697 L452 702Z" fill="#fff"/>
 <!-- teapot -->
 <g fill="#f6c500">
  <path d="M482 685.5 Q482 684 484 684 H494 Q496 684 496 686 V702.5 Q496 704 494.5 704 H483.5 Q482 704 482 702.5Z"/>
  <path d="M485.5 684.5 Q486.5 681 488.5 681 Q490.5 681 491.5 684.5Z"/>
  <path d="M482.5 690 L480 691.5 Q477.5 688.5 475.5 689.5 Q475 692 478 695.5 L482.5 699Z"/>
  <path d="M496 689.5 H500.2 V701.5 H496 V699.8 H498.4 V691.2 H496Z"/>
 </g>
 <circle cx="484.3" cy="693.2" r="1.1" fill="#e0541e"/>
 <ellipse cx="488.5" cy="693.2" rx="1.3" ry="1.7" fill="#d9431a"/>
 <circle cx="492.6" cy="693.2" r="1.1" fill="#e0541e"/>
 <!-- waveform -->
 <rect x="517" y="679" width="26" height="26.5" rx="1" fill="#3f8bd6"/>
 <path d="M520.5 689.5 L523 690.5 L526 697 L529 686 L532 693 L534 688 L537 695 L540 695" fill="none" stroke="#a9d3f5" stroke-width="1.4"/>
 <!-- chart -->
 <rect x="559.5" y="680.7" width="26.2" height="24" fill="#656565"/>
 <path d="M559.5 694 Q566 690 570 695 Q575 698 578 688 Q582 684 585.7 690 V704.7 H559.5Z" fill="#16977a"/>
 <path d="M559.5 700 Q566 697 571 700 Q578 702 585.7 698 V704.7 H559.5Z" fill="#3fcf6a"/>
 <!-- mixer -->
 <rect x="602.3" y="679.5" width="26" height="26" rx="1" fill="#e9455c"/>
 <rect x="606.5" y="685" width="1.6" height="16.5" rx="0.8" fill="#a92d40"/>
 <rect x="614" y="685" width="1.6" height="16.5" rx="0.8" fill="#a92d40"/>
 <rect x="621" y="685" width="1.6" height="16.5" rx="0.8" fill="#a92d40"/>
 <circle cx="607.3" cy="690" r="2.5" fill="#fff"/>
 <circle cx="614.8" cy="696.5" r="2.5" fill="#fff"/>
 <circle cx="621.8" cy="693" r="2.5" fill="#fff"/>
 <!-- terminal -->
 <rect x="645" y="680.7" width="26" height="23.5" rx="1" fill="#5b5b5b"/>
 <text x="647" y="691" font-family="Liberation Mono" font-size="9.5" font-weight="bold" fill="#f0f0f0">$</text>
 <rect x="653.5" y="690" width="6" height="1.4" fill="#f0f0f0"/>
 <!-- obs -->
 <g transform="translate(701 693)">
  <circle r="15" fill="#bdbdbd"/>
  <circle r="13.5" fill="#050505"/>
  <g fill="#cfcfcf">
   <path d="M2.5 -0.2 Q-8.5 -3 -5 -12.4 Q-3.3 -13.1 -1.3 -12.9 Q-5.5 -5.5 3.6 -3 Z" transform="rotate(-12)"/>
   <path d="M2.5 -0.2 Q-8.5 -3 -5 -12.4 Q-3.3 -13.1 -1.3 -12.9 Q-5.5 -5.5 3.6 -3 Z" transform="rotate(108)"/>
   <path d="M2.5 -0.2 Q-8.5 -3 -5 -12.4 Q-3.3 -13.1 -1.3 -12.9 Q-5.5 -5.5 3.6 -3 Z" transform="rotate(228)"/>
  </g>
  <circle r="2.2" fill="#050505"/>
 </g>
</svg>

<svg style="position:absolute;left:0;top:0;overflow:visible" width="1" height="1"><path d="M96.84 614.47 L98.86 614.57 L98.86 617.43 L96.84 617.53 L96.35 618.69 L97.72 620.19 L95.69 622.22 L94.19 620.85 L93.03 621.34 L92.93 623.36 L90.07 623.36 L89.97 621.34 L88.81 620.85 L87.31 622.22 L85.28 620.19 L86.65 618.69 L86.16 617.53 L84.14 617.43 L84.14 614.57 L86.16 614.47 L86.65 613.31 L85.28 611.81 L87.31 609.78 L88.81 611.15 L89.97 610.66 L90.07 608.64 L92.93 608.64 L93.03 610.66 L94.19 611.15 L95.69 609.78 L97.72 611.81 L96.35 613.31Z" fill="#111" stroke="#111" stroke-width="0.6" stroke-linejoin="round"/><circle cx="91.5" cy="616" r="3.15" fill="#eff0f1"/></svg>
<div id="menu">
<div class="mi" style="top:-0.5px"><span class="lbl">Enable Preview</span><div class="cb on"><div class="cbin"></div></div></div>
<div class="mi" style="top:23.5px"><span class="lbl">Lock Preview</span><div class="cb"></div></div>
<div class="mi" style="top:47.5px"><span class="lbl">Preview Scaling</span><svg class="arr" width="8" height="10" viewBox="0 0 8 10"><path d="M1.5 1 L6 5 L1.5 9" fill="none" stroke="currentColor" stroke-width="1.1"/></svg></div>
<div class="mi" style="top:71.5px"><span class="lbl">Fullscreen Projector (Preview)</span><svg class="arr" width="8" height="10" viewBox="0 0 8 10"><path d="M1.5 1 L6 5 L1.5 9" fill="none" stroke="currentColor" stroke-width="1.1"/></svg></div>
<div class="mi" style="top:95.5px"><span class="lbl">Windowed Projector (Preview)</span></div>
<div class="sep" style="top:122px"></div>
<div class="mi" style="top:126px"><span class="lbl">Add</span><svg class="arr" width="8" height="10" viewBox="0 0 8 10"><path d="M1.5 1 L6 5 L1.5 9" fill="none" stroke="currentColor" stroke-width="1.1"/></svg></div>
<div class="sep" style="top:153px"></div>
<div class="mi" style="top:157px"><span class="lbl">Copy</span><span class="sc">Ctrl+C</span></div>
<div class="mi dis" style="top:181px"><span class="lbl">Paste (Reference)</span><span class="sc">Ctrl+V</span></div>
<div class="mi dis" style="top:205px"><span class="lbl">Paste (Duplicate)</span></div>
<div class="sep" style="top:232px"></div>
<div class="mi" style="top:236px"><span class="lbl">Copy Filters</span></div>
<div class="mi dis" style="top:260px"><span class="lbl">Paste Filters</span></div>
<div class="sep" style="top:287px"></div>
<div class="mi" style="top:290px"><span class="lbl">Set Color</span><svg class="arr" width="8" height="10" viewBox="0 0 8 10"><path d="M1.5 1 L6 5 L1.5 9" fill="none" stroke="currentColor" stroke-width="1.1"/></svg></div>
<div class="mi" style="top:314px"><span class="lbl">Rename</span></div>
<div class="mi" style="top:338px"><span class="lbl">Remove</span></div>
<div class="sep" style="top:365px"></div>
<div class="mi hl" style="top:369px"><span class="lbl">Order</span><svg class="arr" width="8" height="10" viewBox="0 0 8 10"><path d="M1.5 1 L6 5 L1.5 9" fill="none" stroke="currentColor" stroke-width="1.1"/></svg></div>
<div class="mi" style="top:393px"><span class="lbl">Transform</span><svg class="arr" width="8" height="10" viewBox="0 0 8 10"><path d="M1.5 1 L6 5 L1.5 9" fill="none" stroke="currentColor" stroke-width="1.1"/></svg></div>
<div class="sep" style="top:420px"></div>
<div class="mi" style="top:424px"><span class="lbl">Hide in Mixer</span><div class="cb"></div></div>
<div class="mi" style="top:448px"><span class="lbl">Deinterlacing</span><svg class="arr" width="8" height="10" viewBox="0 0 8 10"><path d="M1.5 1 L6 5 L1.5 9" fill="none" stroke="currentColor" stroke-width="1.1"/></svg></div>
<div class="sep" style="top:475px"></div>
<div class="mi" style="top:478px"><span class="lbl">Resize output (source size)</span></div>
<div class="mi" style="top:502px"><span class="lbl">Scale Filtering</span><svg class="arr" width="8" height="10" viewBox="0 0 8 10"><path d="M1.5 1 L6 5 L1.5 9" fill="none" stroke="currentColor" stroke-width="1.1"/></svg></div>
<div class="sep" style="top:529px"></div>
<div class="mi" style="top:533px"><span class="lbl">Fullscreen Projector (Source)</span><svg class="arr" width="8" height="10" viewBox="0 0 8 10"><path d="M1.5 1 L6 5 L1.5 9" fill="none" stroke="currentColor" stroke-width="1.1"/></svg></div>
<div class="mi" style="top:557px"><span class="lbl">Windowed Projector (Source)</span></div>
<div class="sep" style="top:585px"></div>
<div class="mi dis" style="top:588px"><span class="lbl">Interact</span></div>
<div class="mi" style="top:612px"><span class="lbl">Filters</span></div>
<div class="mi" style="top:636px"><span class="lbl">Properties</span></div>
</div>
<div id="sub">
<div class="smi" style="top:0px"><span class="lbl">Move Up</span><span class="sc">Ctrl+Up</span></div>
<div class="smi" style="top:24px"><span class="lbl">Move Down</span><span class="sc">Ctrl+Down</span></div>
<div class="sep" style="top:50px;left:0;width:198px"></div>
<div class="smi" style="top:55px"><span class="lbl">Move to Top</span><span class="sc">Ctrl+Home</span></div>
<div class="smi" style="top:79px"><span class="lbl">Move to Bottom</span><span class="sc">Ctrl+End</span></div>
</div>
</body></html>
